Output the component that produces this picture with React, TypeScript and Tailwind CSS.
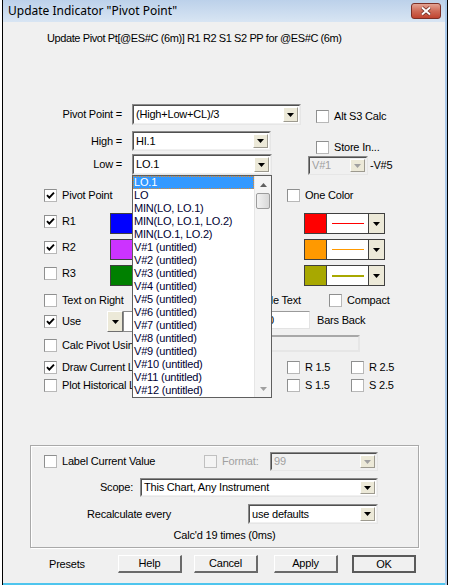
import React from 'react';
import clsx from 'clsx';

const listItems = [
  'LO.1',
  'LO',
  'MIN(LO, LO.1)',
  'MIN(LO, LO.1, LO.2)',
  'MIN(LO.1, LO.2)',
  'V#1 (untitled)',
  'V#2 (untitled)',
  'V#3 (untitled)',
  'V#4 (untitled)',
  'V#5 (untitled)',
  'V#6 (untitled)',
  'V#7 (untitled)',
  'V#8 (untitled)',
  'V#9 (untitled)',
  'V#10 (untitled)',
  'V#11 (untitled)',
  'V#12 (untitled)',
];

function Arrow({ disabled }: { disabled?: boolean }) {
  return (
    <svg width="7" height="4" viewBox="0 0 7 4">
      <path d="M0 0h7L3.5 4z" fill={disabled ? '#a0a0a0' : '#000'} />
    </svg>
  );
}

function DropBtn({ disabled }: { disabled?: boolean }) {
  return (
    <div className="w-[15px] m-px flex items-center justify-center bg-[#ece9d8] border border-t-white border-l-white border-r-[#9d9a8f] border-b-[#9d9a8f]">
      <Arrow disabled={disabled} />
    </div>
  );
}

// labelClass lets a label be cut where the open list covers it
function Check({
  checked,
  disabled,
  label,
  labelClass,
}: {
  checked?: boolean;
  disabled?: boolean;
  label?: string;
  labelClass?: string;
}) {
  return (
    <div className="flex items-center h-[13px]">
      <div
        className={clsx(
          'w-[13px] h-[13px] shrink-0 border flex items-center justify-center',
          disabled ? 'border-[#c0c0c0] bg-[#f4f4f4]' : 'border-[#8e8f8f] border-b-[#b8b8b8] border-r-[#b8b8b8] bg-white'
        )}
      >
        {checked && (
          <svg width="9" height="9" viewBox="0 0 9 9">
            <path d="M1 4.2l2.3 2.4L8 1.6" fill="none" stroke="#000" strokeWidth="1.9" />
          </svg>
        )}
      </div>
      {label && (
        <span
          className={clsx(
            'ml-[5px] whitespace-nowrap leading-[13px]',
            disabled && 'text-[#a0a0a0]',
            labelClass
          )}
        >
          {label}
        </span>
      )}
    </div>
  );
}

function Combo({ text, className, disabled }: { text: string; className: string; disabled?: boolean }) {
  return (
    <div
      className={clsx(
        'flex border border-t-[#8a8a8a] border-l-[#8a8a8a] border-r-[#e6e6e6] border-b-[#e6e6e6]',
        className
      )}
    >
      <div
        className={clsx(
          'flex flex-1 min-w-0 border border-t-[#505050] border-l-[#505050] border-r-[#f0f0f0] border-b-[#f0f0f0]',
          disabled ? 'bg-[#f0f0f0] text-[#a0a0a0]' : 'bg-white'
        )}
      >
        <span className="flex-1 pl-[2px] self-center whitespace-nowrap overflow-hidden">{text}</span>
        <DropBtn disabled={disabled} />
      </div>
    </div>
  );
}

function ColorPicker({ swatch, line }: { swatch: string; line: string }) {
  return (
    <div className="flex h-[21px] w-[81px] border border-[#404040]">
      <div className={clsx('w-[22px] border-r border-[#404040]', swatch)} />
      <div className="w-[42px] bg-white flex items-center justify-center border-r border-[#404040]">
        <div className={clsx('w-[32px] h-0', line)} />
      </div>
      <div className="flex-1 bg-[#ece9d8] flex items-center justify-center">
        <Arrow />
      </div>
    </div>
  );
}

function Btn({ label, isDefault }: { label: string; isDefault?: boolean }) {
  return (
    <div
      className={clsx(
        'w-[64px] h-[18px] flex items-center justify-center bg-[#f0f0f0]',
        isDefault
          ? 'border-2 border-[#5a5a5a]'
          : 'border border-t-[#fff] border-l-[#fff] border-r-2 border-b-2 border-r-[#6a6a6a] border-b-[#6a6a6a]'
      )}
    >
      {label}
    </div>
  );
}

function LowList() {
  return (
    <div className="absolute left-0 top-full z-10 w-[140px] h-[223px] bg-white border border-[#5f5f5f] flex">
      <div className="flex-1 min-w-0 overflow-hidden">
        {listItems.map((item, i) => (
          <div
            key={item}
            className={clsx(
              'h-[13px] leading-[13px] pl-px whitespace-nowrap',
              i === 0
                ? 'bg-[#3399ff] text-white outline-1 outline-dotted outline-[#e08a2c] -outline-offset-1'
                : 'text-[#000033]'
            )}
          >
            {item}
          </div>
        ))}
      </div>
      <div className="w-[17px] flex flex-col bg-[#f4f4f4] border-l border-[#e6e6e6]">
        <div className="h-[17px] flex items-center justify-center">
          <svg width="7" height="4" viewBox="0 0 7 4">
            <path d="M0 4h7L3.5 0z" fill="#606060" />
          </svg>
        </div>
        <div className="mx-px h-[16px] rounded-[2px] border border-[#9c9c9c] bg-gradient-to-r from-[#f2f2f2] to-[#d8d8d8]" />
        <div className="flex-1" />
        <div className="h-[17px] flex items-center justify-center">
          <svg width="7" height="4" viewBox="0 0 7 4">
            <path d="M0 0h7L3.5 4z" fill="#a0a0a0" />
          </svg>
        </div>
      </div>
    </div>
  );
}

export default function App() {
  return (
    <div className="w-[450px] h-[585px] flex overflow-hidden bg-white text-[11px] text-black font-['Liberation_Sans',Arial,sans-serif]">
      <div className="w-[2px] bg-white" />
      <div className="w-px bg-black" />

      {/* window */}
      <div className="w-[442px] flex flex-col">
        <div className="h-[22px] flex items-start bg-gradient-to-b from-[#bcd1ea] to-[#d8e5f3]">
          <span className="ml-[5px] mt-[3px] text-[12px] leading-[16px] font-['Noto_Sans',sans-serif] text-black">
            Update Indicator "Pivot Point"
          </span>
          <div className="ml-auto mr-[4px] mt-[3px] w-[30px] h-[16px] rounded-[3px] border border-[#7d3027] bg-gradient-to-b from-[#e3a394] via-[#cf6a57] to-[#c0432f] flex items-center justify-center">
            <svg width="12" height="10" viewBox="0 0 12 10">
              <path d="M2 1.5l8 7M10 1.5l-8 7" stroke="#6b2a22" strokeWidth="3.6" />
              <path d="M2 1.5l8 7M10 1.5l-8 7" stroke="#fff" strokeWidth="2" />
            </svg>
          </div>
        </div>

        <div className="flex-1 flex flex-col bg-[#f0f0f0] tracking-[-0.2px]">
          <div className="mt-[9px] ml-[44px] leading-[14px] whitespace-nowrap tracking-[-0.4px]">
            Update Pivot Pt[@ES#C (6m)] R1 R2 S1 S2 PP for @ES#C (6m)
          </div>

          {/* formula selects */}
          <div className="mt-[59px] flex">
            <div className="w-[305px] flex flex-col">
              <div className="flex items-center h-[21px]">
                <span className="w-[119px] text-right">Pivot Point =</span>
                <Combo text="(High+Low+CL)/3" className="ml-[10px] w-[169px] h-[21px]" />
              </div>
              <div className="mt-[6px] flex items-center h-[20px]">
                <span className="w-[119px] text-right">High =</span>
                <Combo text="HI.1" className="ml-[10px] w-[139px] h-[20px]" />
              </div>
              <div className="mt-[3px] flex items-center h-[21px]">
                <span className="w-[119px] text-right">Low =</span>
                <div className="relative ml-[10px]">
                  <Combo text="LO.1" className="w-[140px] h-[21px]" />
                  <LowList />
                </div>
              </div>
            </div>
            <div className="flex flex-col">
              <div className="ml-[8px] mt-[6px]">
                <Check label="Alt S3 Calc" />
              </div>
              <div className="ml-[8px] mt-[18px]">
                <Check label="Store In..." />
              </div>
              <div className="mt-[2px] flex items-center">
                <Combo text="V#1" disabled className="w-[60px] h-[19px]" />
                <span className="ml-[2px]">-V#5</span>
              </div>
            </div>
          </div>

          {/* line options */}
          <div className="mt-[14px] ml-[41px] flex">
            <div className="w-[243px]">
              <Check checked label="Pivot Point" />
            </div>
            <Check label="One Color" />
          </div>

          <div className="mt-[11px] ml-[41px] flex h-[21px]">
            <div className="w-[66px] mt-[2px]">
              <Check checked label="R1" />
            </div>
            <ColorPicker swatch="bg-[#0000ff]" line="border-t border-[#0000ff]" />
            <div className="ml-[113px]">
              <ColorPicker swatch="bg-[#ff0000]" line="border-t border-[#ff0000]" />
            </div>
          </div>
          <div className="mt-[5px] ml-[41px] flex h-[21px]">
            <div className="w-[66px] mt-[2px]">
              <Check checked label="R2" />
            </div>
            <ColorPicker swatch="bg-[#cc33ff]" line="border-t border-[#cc33ff]" />
            <div className="ml-[113px]">
              <ColorPicker swatch="bg-[#ff9900]" line="border-t border-[#ff9900]" />
            </div>
          </div>
          <div className="mt-[5px] ml-[41px] flex h-[21px]">
            <div className="w-[66px] mt-[2px]">
              <Check label="R3" />
            </div>
            <ColorPicker swatch="bg-[#008000]" line="border-t-2 border-[#008000]" />
            <div className="ml-[113px]">
              <ColorPicker swatch="bg-[#a8a800]" line="border-t-2 border-[#a8a800]" />
            </div>
          </div>

          <div className="mt-[8px] ml-[41px] flex">
            <div className="w-[195px]">
              <Check label="Text on Right" labelClass="max-w-[70px] overflow-hidden" />
            </div>
            {/* left part of "Hide Text" lies under the open list */}
            <div className="w-[90px] flex">
              <div className="w-[33px]" />
              <div className="w-[57px] overflow-hidden">
                <div className="-ml-[33px]">
                  <Check label="Hide Text" />
                </div>
              </div>
            </div>
            <Check label="Compact" />
          </div>

          <div className="mt-[4px] ml-[41px] flex h-[21px]">
            <div className="w-[63px] mt-[4px]">
              <Check checked label="Use" />
            </div>
            <div className="w-[16px] h-[21px] flex items-center justify-center bg-[#ece9d8] border border-[#6f6f6f] border-t-white border-l-white">
              <Arrow />
            </div>
            <div className="w-[100px] h-[21px] bg-white border border-[#8a8a8a]" />
            <div className="ml-[41px] w-[46px] h-[18px] pl-[3px] leading-[16px] bg-white border border-t-[#9a9a9a] border-l-[#9a9a9a] border-r-[#e3e3e3] border-b-[#e3e3e3]">
              0
            </div>
            <span className="ml-[7px] leading-[18px]">Bars Back</span>
          </div>

          <div className="mt-[3px] ml-[41px] flex h-[17px]">
            <div className="w-[196px] mt-[4px]">
              <Check label="Calc Pivot Using Prior Day" labelClass="max-w-[70px] overflow-hidden" />
            </div>
            <div className="w-[120px] h-[17px] bg-[#f0f0f0] border-2 border-t-[#a8a8a8] border-l-[#a8a8a8] border-r-[#e6e6e6] border-b-[#e6e6e6]" />
          </div>

          <div className="mt-[9px] ml-[41px] flex">
            <div className="w-[243px]">
              <Check checked label="Draw Current Lines" labelClass="max-w-[70px] overflow-hidden" />
            </div>
            <div className="w-[64px]">
              <Check label="R 1.5" />
            </div>
            <Check label="R 2.5" />
          </div>
          <div className="mt-[5px] ml-[41px] flex">
            <div className="w-[243px]">
              <Check label="Plot Historical Lines" labelClass="max-w-[70px] overflow-hidden" />
            </div>
            <div className="w-[64px]">
              <Check label="S 1.5" />
            </div>
            <Check label="S 2.5" />
          </div>

          {/* label / scope group */}
          <div className="mt-[53px] ml-[27px] w-[389px] h-[103px] flex flex-col border border-[#a9a9a9] shadow-[inset_1px_1px_0_#ffffff,1px_1px_0_#ffffff]">
            <div className="mt-[6px] flex items-center h-[19px]">
              <div className="ml-[13px] w-[160px]">
                <Check label="Label Current Value" />
              </div>
              <div className="w-[66px]">
                <Check disabled label="Format:" />
              </div>
              <Combo text="99" disabled className="w-[108px] h-[19px]" />
            </div>
            <div className="mt-[7px] flex items-center h-[19px]">
              <span className="w-[102px] text-right">Scope:</span>
              <Combo text="This Chart, Any Instrument" className="ml-[7px] w-[238px] h-[19px]" />
            </div>
            <div className="mt-[7px] flex items-center h-[20px]">
              <span className="ml-[56px] w-[161px]">Recalculate every</span>
              <Combo text="use defaults" className="w-[130px] h-[20px]" />
            </div>
            <div className="mt-[4px] text-center leading-[14px]">Calc'd 19 times (0ms)</div>
          </div>

          {/* buttons */}
          <div className="mt-[7px] flex items-center h-[18px]">
            <span className="ml-[46px] w-[69px]">Presets</span>
            <Btn label="Help" />
            <div className="ml-[12px]">
              <Btn label="Cancel" />
            </div>
            <div className="ml-[16px]">
              <Btn label="Apply" />
            </div>
            <div className="ml-[14px]">
              <Btn label="OK" isDefault />
            </div>
          </div>
        </div>

        <div className="h-[2px] bg-[#4fc5ee]" />
      </div>

      <div className="w-[2px] bg-[#a9c8ea]" />
      <div className="w-px bg-black" />
      <div className="w-[2px] bg-white" />
    </div>
  );
}
